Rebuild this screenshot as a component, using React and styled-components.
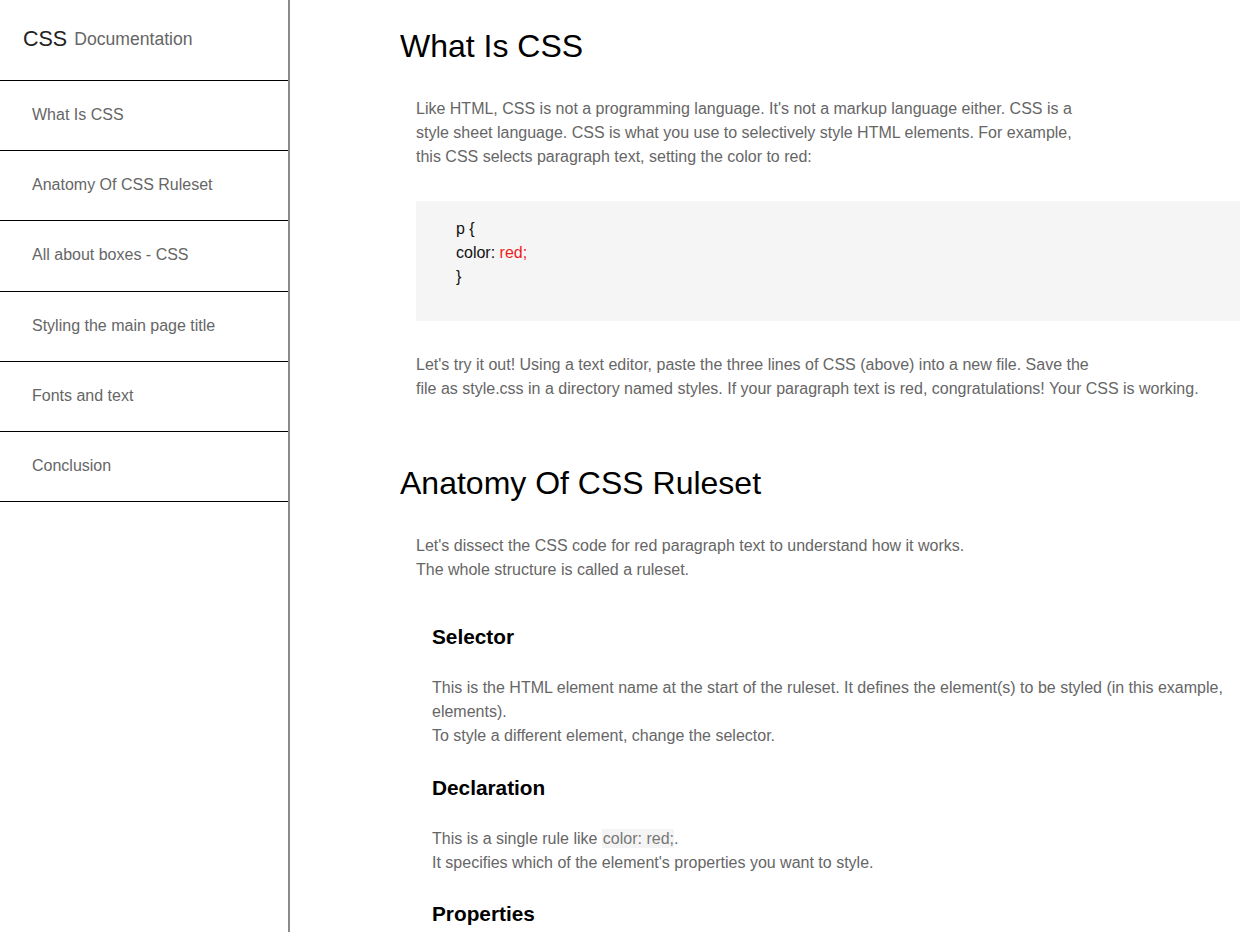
import React from "react";
import styled, { createGlobalStyle } from "styled-components";

const Global = createGlobalStyle`
  html, body { margin: 0; padding: 0; }
  body {
    font-family: "Liberation Sans", Arial, sans-serif;
    background: #fff;
    color: #666;
  }
  * { box-sizing: border-box; }
`;

const Page = styled.div`
  display: flex;
  height: 100vh;
  overflow: hidden;
`;

const Nav = styled.nav`
  width: 290px;
  flex-shrink: 0;
  height: 100vh;
  border-right: 2px solid #8a8a8a;
  display: flex;
  flex-direction: column;
`;

const NavHeader = styled.header`
  height: 81px;
  border-bottom: 1px solid #000;
  display: flex;
  align-items: center;
  padding: 0 0 1px 23px;
  gap: 7px;
`;

const Brand = styled.span`
  font-size: 21.5px;
  color: #222;
`;

const BrandSub = styled.span`
  font-size: 17.6px;
  color: #666;
`;

const NavList = styled.ul`
  list-style: none;
  margin: 0;
  padding: 0;
`;

const NavItem = styled.li`
  height: 70.2px;
  border-bottom: 1px solid #000;
  display: flex;
  align-items: center;
  padding: 0 0 1px 32px;
`;

const NavLink = styled.a`
  font-size: 16px;
  color: #666;
  text-decoration: none;
`;

const Main = styled.main`
  flex: 1;
  min-width: 0;
  padding: 0 0 0 110px;
  overflow: hidden;
`;

const Section = styled.section`
  padding-top: ${(p) => p.$top}px;
`;

const SectionTitle = styled.h1`
  font-size: 32px;
  line-height: 37px;
  font-weight: 400;
  color: #000;
  margin: 0;
  white-space: nowrap;
`;

const Para = styled.p`
  font-size: 16px;
  line-height: 24px;
  color: #666;
  margin: ${(p) => p.$mt}px 0 0 16px;
  white-space: nowrap;
`;

const CodeBlock = styled.pre`
  margin: ${(p) => p.$mt}px 0 0 16px;
  padding: 16px 0 32px 40px;
  background: #f5f5f5;
  font-family: "Liberation Sans", Arial, sans-serif;
  font-size: 16px;
  line-height: 24px;
  color: #111;
  white-space: pre;
`;

const Red = styled.span`
  color: #ee1c1c;
`;

const InlineCode = styled.code`
  font-family: "Liberation Sans", Arial, sans-serif;
  background: #f4f4f4;
  color: #777;
  padding: 1px 0 1px 1px;
`;

const Sub = styled.article`
  margin-left: 32px;
`;

const SubTitle = styled.h3`
  font-size: 20.8px;
  line-height: 24px;
  font-weight: 700;
  color: #000;
  margin: ${(p) => p.$mt}px 0 0 0;
`;

const SubPara = styled.p`
  font-size: 16px;
  line-height: 24px;
  color: #666;
  margin: ${(p) => p.$mt}px 0 0 0;
  white-space: nowrap;
`;

const navItems = [
  "What Is CSS",
  "Anatomy Of CSS Ruleset",
  "All about boxes - CSS",
  "Styling the main page title",
  "Fonts and text",
  "Conclusion",
];

export default function App() {
  return (
    <>
      <Global />
      <Page>
        <Nav>
          <NavHeader>
            <Brand>CSS</Brand>
            <BrandSub>Documentation</BrandSub>
          </NavHeader>
          <NavList>
            {navItems.map((n) => (
              <NavItem key={n}>
                <NavLink href="#">{n}</NavLink>
              </NavItem>
            ))}
          </NavList>
        </Nav>
        <Main>
          <Section $top={28}>
            <SectionTitle>What Is CSS</SectionTitle>
            <Para $mt={32}>
              Like HTML, CSS is not a programming language. It's not a markup language either. CSS is a
              <br />
              style sheet language. CSS is what you use to selectively style HTML elements. For example,
              <br />
              this CSS selects paragraph text, setting the color to red:
            </Para>
            <CodeBlock $mt={32}>
              {"p {\ncolor: "}
              <Red>red;</Red>
              {"\n}"}
            </CodeBlock>
            <Para $mt={32}>
              Let's try it out! Using a text editor, paste the three lines of CSS (above) into a new file. Save the
              <br />
              file as style.css in a directory named styles. If your paragraph text is red, congratulations! Your CSS is working.
            </Para>
          </Section>
          <Section $top={64}>
            <SectionTitle>Anatomy Of CSS Ruleset</SectionTitle>
            <Para $mt={32}>
              Let's dissect the CSS code for red paragraph text to understand how it works.
              <br />
              The whole structure is called a ruleset.
            </Para>
            <Sub>
              <SubTitle $mt={43}>Selector</SubTitle>
              <SubPara $mt={27}>
                This is the HTML element name at the start of the ruleset. It defines the element(s) to be styled (in this example,
                <br />
                elements).
                <br />
                To style a different element, change the selector.
              </SubPara>
              <SubTitle $mt={28}>Declaration</SubTitle>
              <SubPara $mt={27}>
                This is a single rule like <InlineCode>color: red;</InlineCode>.
                <br />
                It specifies which of the element's properties you want to style.
              </SubPara>
              <SubTitle $mt={27}>Properties</SubTitle>
            </Sub>
          </Section>
        </Main>
      </Page>
    </>
  );
}
